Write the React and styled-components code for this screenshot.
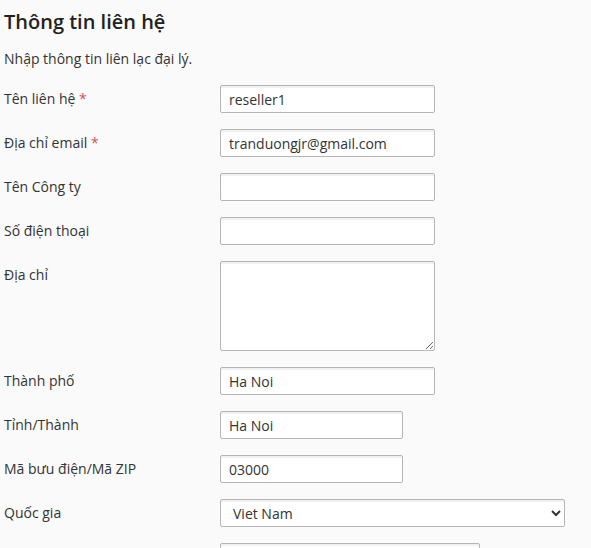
import React from "react";
import styled, { createGlobalStyle } from "styled-components";

const Global = createGlobalStyle`
  html, body { margin: 0; padding: 0; background: #fafafa; }
  body { font-family: "Open Sans", "Noto Sans", sans-serif; color: #333; overflow: hidden; }
`;

const Page = styled.div`
  padding: 8px 4px 0 4px;
`;

const Title = styled.h2`
  margin: 0;
  font-size: 20px;
  font-weight: 600;
  line-height: 27px;
  color: #222;
`;

const Intro = styled.p`
  margin: 14px 0 16px;
  font-size: 14px;
  line-height: 20px;
`;

const Form = styled.div`
  display: flex;
  flex-direction: column;
  gap: 16px;
`;

const Row = styled.div`
  display: grid;
  grid-template-columns: 216px 1fr;
  align-items: start;
`;

const Label = styled.label`
  font-size: 14px;
  line-height: 20px;
  padding-top: 4px;
`;

const Req = styled.span`
  color: #d9534f;
`;

const Control = styled.div`
  display: flex;
`;

const fieldBase = `
  box-sizing: border-box;
  border: 1px solid #b5b5b5;
  border-radius: 2px;
  background: #fff;
  box-shadow: inset 0 2px 1px rgba(0,0,0,0.06);
  font-family: "Open Sans", "Noto Sans", sans-serif;
  font-size: 14px;
  color: #333;
  outline: none;
`;

const Input = styled.input`
  ${fieldBase}
  width: ${(p) => p.$w || 215}px;
  height: 28px;
  padding: 0 8px;
`;

const Area = styled.textarea`
  ${fieldBase}
  width: 215px;
  height: 90px;
  padding: 4px 8px;
  resize: vertical;
`;

const Select = styled.select`
  ${fieldBase}
  width: ${(p) => p.$w || 345}px;
  height: 28px;
  padding: 0 8px;
`;

const rows = [
  { label: "Tên liên hệ", req: true, value: "reseller1" },
  { label: "Địa chỉ email", req: true, value: "tranduongjr@gmail.com" },
  { label: "Tên Công ty", value: "" },
  { label: "Số điện thoại", value: "" },
  { label: "Địa chỉ", area: true },
  { label: "Thành phố", value: "Ha Noi" },
  { label: "Tỉnh/Thành", value: "Ha Noi", w: 183 },
  { label: "Mã bưu điện/Mã ZIP", value: "03000", w: 183 },
  { label: "Quốc gia", select: true },
  { label: "", value: "", w: 260 },
];

export default function App() {
  return (
    <Page>
      <Global />
      <Title>Thông tin liên hệ</Title>
      <Intro>Nhập thông tin liên lạc đại lý.</Intro>
      <Form>
        {rows.map((r, i) => (
          <Row key={i}>
            <Label>
              {r.label}
              {r.req && <Req> *</Req>}
            </Label>
            <Control>
              {r.area ? (
                <Area />
              ) : r.select ? (
                <Select defaultValue="VN">
                  <option value="VN">Viet Nam</option>
                </Select>
              ) : (
                <Input $w={r.w} defaultValue={r.value} />
              )}
            </Control>
          </Row>
        ))}
      </Form>
    </Page>
  );
}
